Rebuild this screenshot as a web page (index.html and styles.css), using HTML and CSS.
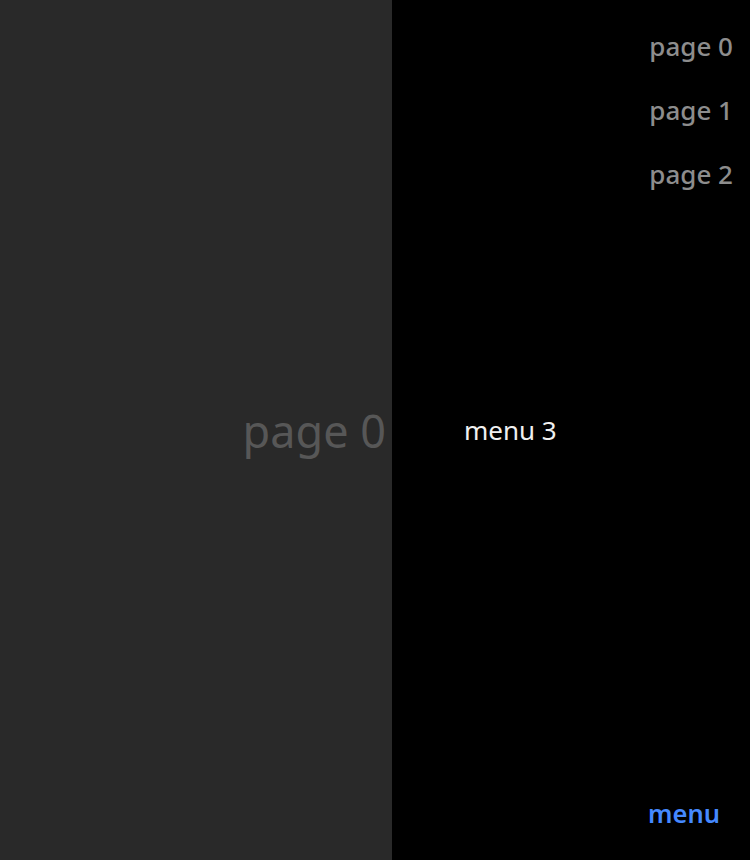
FILE: index.html
```html
<!DOCTYPE html>
<html>
<head>
<meta charset="utf-8">
<link rel="stylesheet" href="styles.css">
</head>
<body>
<div class="app">
  <section class="page">
    <div class="page-title">page 0</div>
  </section>
  <aside class="menu-panel">
    <nav class="nav">
      <a class="nav-link">page 0</a>
      <a class="nav-link">page 1</a>
      <a class="nav-link">page 2</a>
    </nav>
    <div class="menu-body">
      <div class="menu-label">menu 3</div>
    </div>
    <div class="menu-footer">
      <a class="menu-toggle">menu</a>
    </div>
  </aside>
</div>
</body>
</html>
```
FILE: styles.css
```css
html, body {
  margin: 0;
  padding: 0;
  height: 100%;
  background: #000;
  font-family: "Noto Sans", "Open Sans", sans-serif;
}
.app {
  display: flex;
  width: 750px;
  height: 860px;
  overflow: hidden;
}
.page {
  width: 392px;
  flex: none;
  background: #292929;
  display: flex;
  align-items: center;
  justify-content: flex-end;
  padding-right: 6px;
  box-sizing: border-box;
}
.page-title {
  color: #575757;
  font-size: 45px;
  line-height: 1;
  margin-top: 0;
}
.menu-panel {
  flex: 1;
  background: #000;
  display: flex;
  flex-direction: column;
}
.nav {
  display: flex;
  flex-direction: column;
  align-items: flex-end;
  padding: 29px 17px 0 0;
  gap: 30px;
}
.nav-link {
  color: #8d8d8d;
  font-size: 26px;
  font-weight: 500;
  line-height: 34px;
}
.menu-body {
  flex: 1;
  display: flex;
  align-items: center;
  padding-left: 72px;
}
.menu-label {
  color: #f0f0f0;
  font-size: 26px;
  line-height: 1;
  margin-top: -128px;
}
.menu-footer {
  display: flex;
  justify-content: flex-end;
  padding: 0 30px 30px 0;
}
.menu-toggle {
  color: #4589ff;
  font-size: 25.5px;
  font-weight: 600;
  line-height: 34px;
}
```
